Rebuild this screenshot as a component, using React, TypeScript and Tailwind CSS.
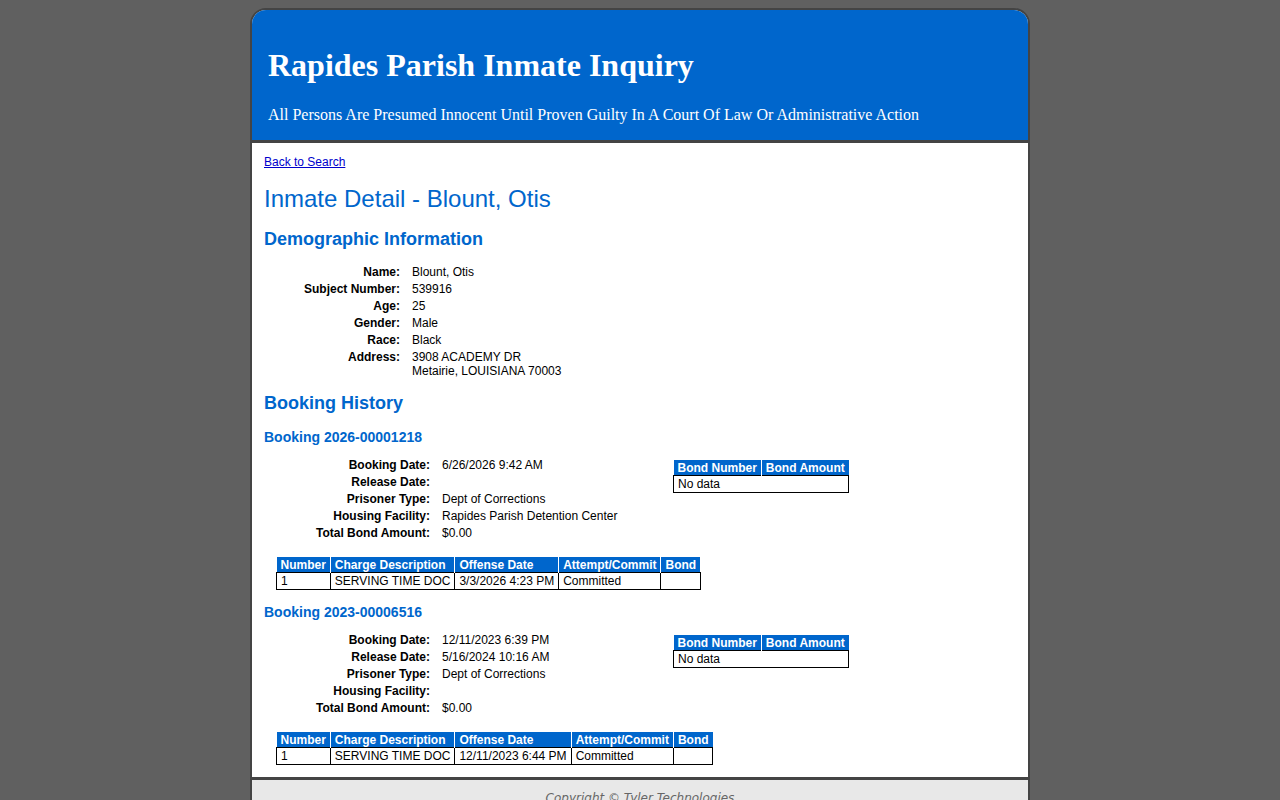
const demographics: [string, string[]][] = [
  ["Name:", ["Blount, Otis"]],
  ["Subject Number:", ["539916"]],
  ["Age:", ["25"]],
  ["Gender:", ["Male"]],
  ["Race:", ["Black"]],
  ["Address:", ["3908 ACADEMY DR", "Metairie, LOUISIANA 70003"]],
];

type Booking = {
  number: string;
  details: [string, string][];
  charges: string[][];
};

const bookings: Booking[] = [
  {
    number: "2026-00001218",
    details: [
      ["Booking Date:", "6/26/2026 9:42 AM"],
      ["Release Date:", ""],
      ["Prisoner Type:", "Dept of Corrections"],
      ["Housing Facility:", "Rapides Parish Detention Center"],
      ["Total Bond Amount:", "$0.00"],
    ],
    charges: [["1", "SERVING TIME DOC", "3/3/2026 4:23 PM", "Committed", ""]],
  },
  {
    number: "2023-00006516",
    details: [
      ["Booking Date:", "12/11/2023 6:39 PM"],
      ["Release Date:", "5/16/2024 10:16 AM"],
      ["Prisoner Type:", "Dept of Corrections"],
      ["Housing Facility:", ""],
      ["Total Bond Amount:", "$0.00"],
    ],
    charges: [["1", "SERVING TIME DOC", "12/11/2023 6:44 PM", "Committed", ""]],
  },
];

const chargeHeaders = ["Number", "Charge Description", "Offense Date", "Attempt/Commit", "Bond"];

function DataTable({ headers, rows }: { headers: string[]; rows: string[][] | null }) {
  return (
    <table className="border-collapse text-[12px] leading-[14px]">
      <thead>
        <tr>
          {headers.map((h, i) => (
            <th
              key={h}
              className={`bg-[#0066cc] text-white font-bold text-left px-[4px] py-[0.5px] whitespace-nowrap ${
                i < headers.length - 1 ? "border-r border-white" : ""
              }`}
            >
              {h}
            </th>
          ))}
        </tr>
      </thead>
      <tbody>
        {rows ? (
          rows.map((r, ri) => (
            <tr key={ri}>
              {r.map((c, ci) => (
                <td key={ci} className="border border-black px-[4px] py-[1px] whitespace-nowrap">
                  {c}
                </td>
              ))}
            </tr>
          ))
        ) : (
          <tr>
            <td colSpan={headers.length} className="border border-black px-[4px] py-[1px]">
              No data
            </td>
          </tr>
        )}
      </tbody>
    </table>
  );
}

export default function App() {
  return (
    <div className="min-h-screen bg-[#606060] pt-[8px] font-['Liberation_Sans',Arial,sans-serif] text-black">
      <div className="mx-auto w-[780px] border-2 border-[#444] rounded-t-[16px] overflow-hidden bg-white">
        {/* Header */}
        <div className="bg-[#0066cc] text-white font-['Liberation_Serif','Times_New_Roman',serif] pl-[16px] pt-[37px] pb-[16px] border-b-[3px] border-[#444]">
          <h1 className="text-[32px] leading-[37px] font-bold">Rapides Parish Inmate Inquiry</h1>
          <p className="text-[16px] leading-[18px] mt-[22px]">
            All Persons Are Presumed Innocent Until Proven Guilty In A Court Of Law Or Administrative Action
          </p>
        </div>

        {/* Content */}
        <div className="px-[12px] pt-[6px] pb-[12px]">
          <a href="#" className="text-[12px] leading-[14px] text-[#0000cc] underline">
            Back to Search
          </a>
          <h1 className="mt-[12px] text-[24px] leading-[28px] text-[#0066cc]">Inmate Detail - Blount, Otis</h1>
          <h2 className="mt-[16px] text-[18px] leading-[21px] font-bold text-[#0066cc]">Demographic Information</h2>

          <div className="mt-[13px] grid grid-cols-[136px_1fr] gap-x-[12px] text-[12px] leading-[14px]">
            {demographics.map(([label, value]) => (
              <div key={label} className="contents">
                <div className="text-right font-bold py-[1.5px]">{label}</div>
                <div className="py-[1.5px]">
                  {value.map((v) => (
                    <div key={v}>{v}</div>
                  ))}
                </div>
              </div>
            ))}
          </div>

          <h2 className="mt-[14px] text-[18px] leading-[21px] font-bold text-[#0066cc]">Booking History</h2>

          {bookings.map((b, bi) => (
            <div key={b.number} className={bi === 0 ? "mt-[15px]" : "mt-[14px]"}>
              <h3 className="text-[14px] leading-[16px] font-bold text-[#0066cc]">Booking {b.number}</h3>
              <div className="mt-[11px] flex">
                <div className="w-[409px] grid grid-cols-[166px_1fr] gap-x-[12px] content-start text-[12px] leading-[14px]">
                  {b.details.map(([label, value]) => (
                    <div key={label} className="contents">
                      <div className="text-right font-bold py-[1.5px]">{label}</div>
                      <div className="py-[1.5px] h-[17px]">{value}</div>
                    </div>
                  ))}
                </div>
                <div className="pt-[4px]">
                  <DataTable headers={["Bond Number", "Bond Amount"]} rows={null} />
                </div>
              </div>
              <div className="mt-[16px] pl-[12px]">
                <DataTable headers={chargeHeaders} rows={b.charges} />
              </div>
            </div>
          ))}
        </div>

        {/* Footer */}
        <div className="bg-[#e8e8e8] border-t-[3px] border-[#444] pt-[11px] pb-[14px] text-center text-[12px] leading-[14px] italic text-[#666] font-['DejaVu_Sans',sans-serif]">
          Copyright © Tyler Technologies
        </div>
      </div>
    </div>
  );
}
